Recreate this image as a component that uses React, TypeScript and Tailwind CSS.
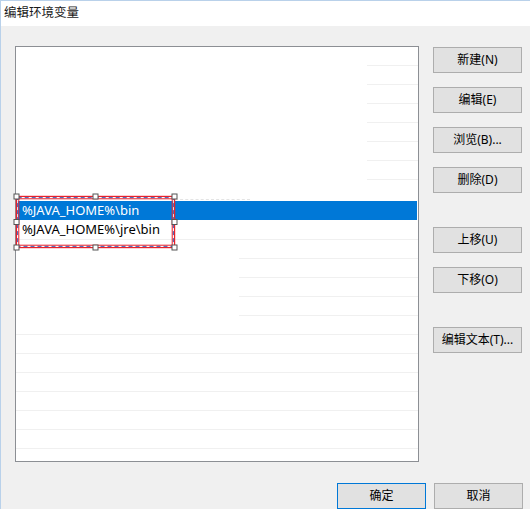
import { JSX } from 'react';

const cjk = "font-['Segoe_UI','Noto_Sans','Noto_Sans_CJK_SC',sans-serif]";

// rows of the list: where each faint separator starts (px from list's inner left), null = no line
const topRows: (number | null)[] = [351, 351, 351, 351, 351, 351, 351, null];
const bottomRows: (number | null)[] = [223, 223, 223, 223, 0, 0, 0, 0, 0, 0, 0];

function Row({ lineFrom }: { lineFrom: number | null }): JSX.Element {
  return (
    <div className="h-[19px] flex flex-col justify-end shrink-0">
      {lineFrom !== null && <div className="h-px bg-[#f0f0f0]" style={{ marginLeft: lineFrom }} />}
    </div>
  );
}

function Btn({ label, primary, className = '' }: { label: string; primary?: boolean; className?: string }): JSX.Element {
  return (
    <button
      className={`w-[89px] h-[26px] flex items-center justify-center bg-[#e1e1e1] border text-[12px] text-black ${cjk} ${
        primary ? 'border-[#0078d7]' : 'border-[#adadad]'
      } ${className}`}
    >
      {label}
    </button>
  );
}

function Annotation(): JSX.Element {
  const hx = [3.5, 82.5, 161.5];
  const hy = [3.5, 29, 54.5];
  const handles: [number, number][] = [];
  hx.forEach((x) => hy.forEach((y) => { if (!(x === 82.5 && y === 29)) handles.push([x, y]); }));
  return (
    <svg className="absolute left-[12px] top-[192px]" width="166" height="58" viewBox="0 0 166 58">
      <rect x="3.5" y="3.5" width="158" height="51" fill="none" stroke="#e8202a" strokeWidth="1.4" />
      <rect x="4.7" y="4.7" width="155.6" height="48.6" fill="none" stroke="#ffffff" strokeWidth="1" />
      <rect x="4.7" y="4.7" width="155.6" height="48.6" fill="none" stroke="#2a4fb0" strokeWidth="1" strokeDasharray="4 3" />
      <rect x="5.8" y="5.8" width="153.4" height="46.4" fill="none" stroke="#e8202a" strokeWidth="1" />
      {handles.map(([x, y]) => (
        <rect key={`${x}-${y}`} x={x - 2.5} y={y - 2.5} width="5" height="5" fill="#ffffff" stroke="#555555" strokeWidth="1" />
      ))}
    </svg>
  );
}

export default function App(): JSX.Element {
  return (
    <div className="relative w-[530px] h-[509px] overflow-hidden bg-[#f0f0f0] border-l border-t border-[#b9d1ea] flex flex-col">
      {/* title bar */}
      <div className={`h-[26px] bg-white flex items-center pl-[3px] text-[12.5px] text-[#1a1a1a] ${cjk}`}>编辑环境变量</div>

      <div className="flex mt-[20px]">
        {/* list */}
        <div className="ml-[14px] w-[404px] h-[416px] bg-white border border-[#8c8f94] overflow-hidden flex flex-col">
          {topRows.map((l, i) => (
            <Row key={`t${i}`} lineFrom={l} />
          ))}
          <div className="h-[2px] shrink-0 flex">
            <div className="ml-[159px] w-[75px] border-t border-dashed border-[#e4e4e4]" />
          </div>
          <div className={`h-[19px] shrink-0 ml-px mr-px bg-[#0078d7] text-white text-[13px] leading-[19px] pl-[5px] ${cjk}`}>
            %JAVA_HOME%\bin
          </div>
          <div className={`h-[19px] shrink-0 text-black text-[13px] leading-[19px] pl-[6px] ${cjk}`}>%JAVA_HOME%\jre\bin</div>
          <div className="h-px bg-[#f0f0f0] shrink-0" />
          {bottomRows.map((l, i) => (
            <Row key={`b${i}`} lineFrom={l} />
          ))}
        </div>

        {/* buttons */}
        <div className="ml-[14px] mt-px flex flex-col">
          <Btn label="新建(N)" />
          <Btn label="编辑(E)" className="mt-[14px]" />
          <Btn label="浏览(B)..." className="mt-[14px]" />
          <Btn label="删除(D)" className="mt-[14px]" />
          <Btn label="上移(U)" className="mt-[34px]" />
          <Btn label="下移(O)" className="mt-[14px]" />
          <Btn label="编辑文本(T)..." className="mt-[34px]" />
        </div>
      </div>

      <div className="flex justify-end gap-[8px] mt-[21px] pr-[7px]">
        <Btn label="确定" primary />
        <Btn label="取消" />
      </div>

      <Annotation />
    </div>
  );
}
